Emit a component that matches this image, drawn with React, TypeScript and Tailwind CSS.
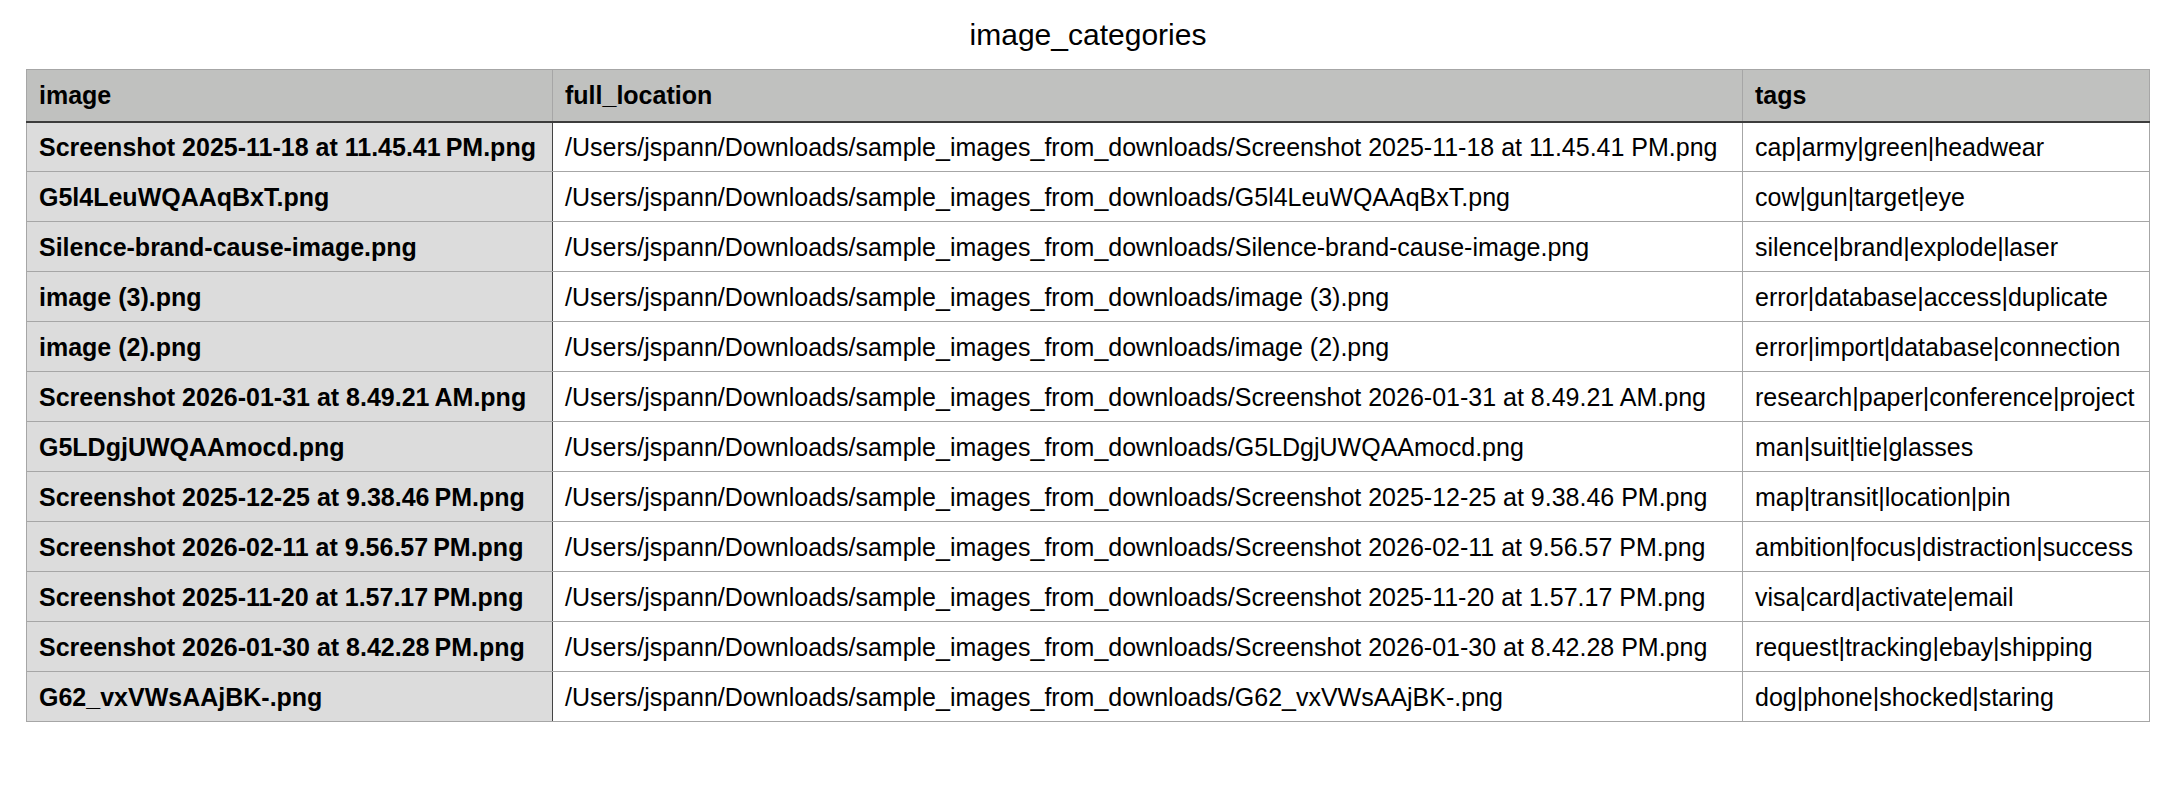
import React from 'react'

const base = '/Users/jspann/Downloads/sample_images_from_downloads/'
const nb = '\u202F'

const rows = [
  { image: `Screenshot 2025-11-18 at 11.45.41${nb}PM.png`, tags: 'cap|army|green|headwear' },
  { image: 'G5l4LeuWQAAqBxT.png', tags: 'cow|gun|target|eye' },
  { image: 'Silence-brand-cause-image.png', tags: 'silence|brand|explode|laser' },
  { image: 'image (3).png', tags: 'error|database|access|duplicate' },
  { image: 'image (2).png', tags: 'error|import|database|connection' },
  { image: `Screenshot 2026-01-31 at 8.49.21${nb}AM.png`, tags: 'research|paper|conference|project' },
  { image: 'G5LDgjUWQAAmocd.png', tags: 'man|suit|tie|glasses' },
  { image: `Screenshot 2025-12-25 at 9.38.46${nb}PM.png`, tags: 'map|transit|location|pin' },
  { image: `Screenshot 2026-02-11 at 9.56.57${nb}PM.png`, tags: 'ambition|focus|distraction|success' },
  { image: `Screenshot 2025-11-20 at 1.57.17${nb}PM.png`, tags: 'visa|card|activate|email' },
  { image: `Screenshot 2026-01-30 at 8.42.28${nb}PM.png`, tags: 'request|tracking|ebay|shipping' },
  { image: 'G62_vxVWsAAjBK-.png', tags: 'dog|phone|shocked|staring' },
]

export default function App() {
  return (
    <div className="min-h-[806px] bg-white text-black font-['Liberation_Sans',Arial,sans-serif]">
      <h1 className="pt-[17px] mb-[16px] text-center text-[30px] leading-[36px] font-normal">
        image_categories
      </h1>
      <div className="mx-[26px]">
        <table className="w-full table-fixed border-collapse text-[25px] leading-[30px]">
          <colgroup>
            <col className="w-[526px]" />
            <col className="w-[1190px]" />
            <col />
          </colgroup>
          <thead>
            <tr className="h-[52px] bg-[#c0c1bf]">
              <th className="border border-[#a6a6a6] border-b-2 border-b-[#3c3c3c] px-[12px] text-left font-bold">image</th>
              <th className="border border-[#a6a6a6] border-b-2 border-b-[#3c3c3c] px-[12px] text-left font-bold">full_location</th>
              <th className="border border-[#a6a6a6] border-b-2 border-b-[#3c3c3c] px-[12px] text-left font-bold">tags</th>
            </tr>
          </thead>
          <tbody>
            {rows.map((r) => (
              <tr key={r.image} className="h-[50px]">
                <td className="border border-[#a6a6a6] border-r-[#444] bg-[#dcdcdc] px-[12px] font-bold whitespace-nowrap">
                  {r.image}
                </td>
                <td className="border border-[#a6a6a6] border-l-[#444] px-[12px] whitespace-nowrap">
                  {base + r.image.replace(nb, ' ')}
                </td>
                <td className="border border-[#a6a6a6] px-[12px] whitespace-nowrap">{r.tags}</td>
              </tr>
            ))}
          </tbody>
        </table>
      </div>
    </div>
  )
}
